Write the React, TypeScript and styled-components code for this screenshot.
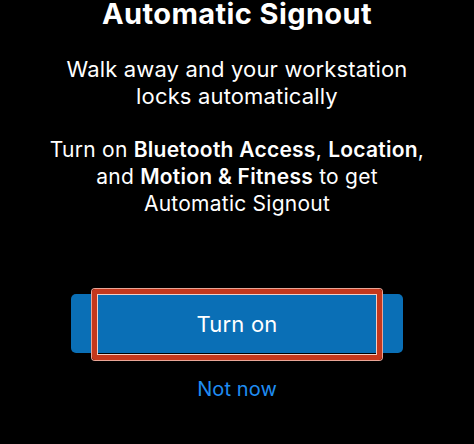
import React from 'react';
import styled, { createGlobalStyle } from 'styled-components';

const GlobalStyle = createGlobalStyle`
  html, body {
    margin: 0;
    padding: 0;
    background: #000;
  }
  body {
    font-family: Inter, "Noto Sans", "Liberation Sans", sans-serif;
    color: #fff;
    -webkit-font-smoothing: antialiased;
  }
`;

const Screen = styled.div`
  width: 474px;
  height: 444px;
  overflow: hidden;
  background: #000;
  display: flex;
  flex-direction: column;
  align-items: center;
`;

const Title = styled.h1`
  margin: 0;
  font-size: 29px;
  line-height: 27px;
  font-weight: 700;
  letter-spacing: 0.4px;
  text-align: center;
`;

const Lead = styled.p`
  margin: 29px 0 0;
  font-size: 22px;
  line-height: 27px;
  font-weight: 400;
  text-align: center;
  letter-spacing: 0.15px;
`;

const Body = styled.p`
  margin: 26px 0 0;
  width: 470px;
  font-size: 21px;
  line-height: 27px;
  font-weight: 400;
  text-align: center;
  letter-spacing: 0.25px;

  b {
    font-weight: 600;
  }
`;

const ButtonWrap = styled.div`
  position: relative;
  margin-top: 77px;
  width: 332px;
`;

const PrimaryButton = styled.button`
  width: 100%;
  height: 59px;
  border: none;
  border-radius: 5px;
  background: #0a6fb6;
  color: #fff;
  font-family: inherit;
  font-size: 22px;
  font-weight: 400;
  letter-spacing: 0.2px;
  display: flex;
  align-items: center;
  justify-content: center;
  padding: 0;
`;

const Highlight = styled.div`
  position: absolute;
  left: 21px;
  top: -5px;
  width: 290px;
  height: 71px;
  box-sizing: border-box;
  border: 5px solid #c4381d;
  border-radius: 3px;
  box-shadow: 0 0 0 1px #e9a596, inset 0 0 0 1px #f1cfc6;
  pointer-events: none;
`;

const LinkButton = styled.button`
  margin-top: 23px;
  border: none;
  background: none;
  padding: 0;
  color: #1f8cf2;
  font-family: inherit;
  font-size: 20px;
  line-height: 27px;
  letter-spacing: 0.1px;
`;

export default function App() {
  return (
    <>
      <GlobalStyle />
      <Screen>
        <Title>Automatic Signout</Title>
        <Lead>
          Walk away and your workstation
          <br />
          locks automatically
        </Lead>
        <Body>
          Turn on <b>Bluetooth Access</b>, <b>Location</b>,
          <br />
          and <b>Motion &amp; Fitness</b> to get
          <br />
          Automatic Signout
        </Body>
        <ButtonWrap>
          <PrimaryButton>Turn on</PrimaryButton>
          <Highlight />
        </ButtonWrap>
        <LinkButton>Not now</LinkButton>
      </Screen>
    </>
  );
}
